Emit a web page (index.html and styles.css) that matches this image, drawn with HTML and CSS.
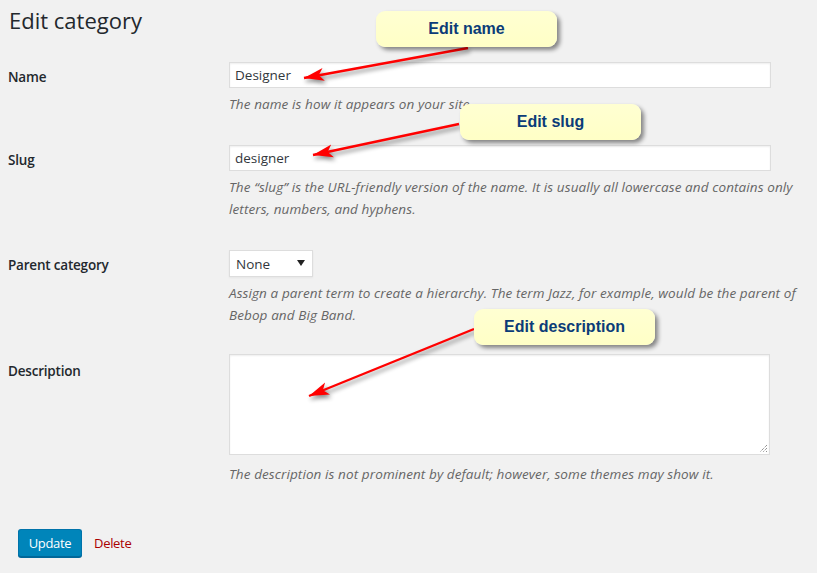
FILE: index.html
```html
<!DOCTYPE html>
<html lang="en">
<head>
<meta charset="utf-8">
<title>Edit category</title>
<link rel="stylesheet" href="styles.css">
</head>
<body>
<div class="page">
  <h1 class="title">Edit category</h1>
  <div class="form">
    <div class="row">
      <div class="label">Name</div>
      <div class="field">
        <div class="input">Designer</div>
        <p class="desc">The name is how it appears on your site.</p>
      </div>
    </div>
    <div class="row">
      <div class="label">Slug</div>
      <div class="field">
        <div class="input">designer</div>
        <p class="desc">The “slug” is the URL-friendly version of the name. It is usually all lowercase and contains only letters, numbers, and hyphens.</p>
      </div>
    </div>
    <div class="row">
      <div class="label">Parent category</div>
      <div class="field">
        <div class="select"><span>None</span><svg class="caret" width="8" height="6" viewBox="0 0 8 6"><path d="M0 0 H8 L4 6 Z" fill="#222"/></svg></div>
        <p class="desc">Assign a parent term to create a hierarchy. The term Jazz, for example, would be the parent of Bebop and Big Band.</p>
      </div>
    </div>
    <div class="row row-desc">
      <div class="label label-desc">Description</div>
      <div class="field">
        <div class="textarea"><svg class="grip" width="9" height="9" viewBox="0 0 9 9"><path d="M8 1 L1 8 M8 4 L4 8 M8 7 L7 8" stroke="#666" stroke-width="1" stroke-dasharray="1 1" fill="none"/></svg></div>
        <p class="desc desc-last">The description is not prominent by default; however, some themes may show it.</p>
      </div>
    </div>
  </div>
  <div class="actions">
    <button class="btn" type="button">Update</button>
    <a class="delete" href="#">Delete</a>
  </div>

  <svg class="arrows" width="817" height="573" viewBox="0 0 817 573">
    <defs>
      <marker id="head" markerUnits="userSpaceOnUse" viewBox="0 -7 20 14" markerWidth="20" markerHeight="14" refX="20" refY="0" orient="auto">
        <path d="M20 0 L0 -6.5 L5 0 L0 6.5 Z" fill="#f00"/>
      </marker>
    </defs>
    <g class="arrow-group" stroke="#f00" stroke-width="2.4" fill="none">
      <line x1="468" y1="48" x2="304" y2="78" marker-end="url(#head)"/>
      <line x1="459" y1="124" x2="313" y2="155" marker-end="url(#head)"/>
      <line x1="474" y1="329" x2="309" y2="396" marker-end="url(#head)"/>
    </g>
  </svg>

  <div class="callout callout-name">Edit name</div>
  <div class="callout callout-slug">Edit slug</div>
  <div class="callout callout-desc">Edit description</div>
</div>
</body>
</html>
```

FILE: styles.css
```css
* { box-sizing: border-box; }
html, body {
  margin: 0;
  padding: 0;
  background: #f1f1f1;
}
body {
  font-family: "Open Sans", "Noto Sans", sans-serif;
  color: #23282d;
  width: 817px;
  height: 573px;
  overflow: hidden;
}
.page {
  position: relative;
  width: 817px;
  height: 573px;
}
.title {
  margin: 0;
  padding: 5px 0 0 9px;
  font-size: 22px;
  line-height: 30px;
  font-weight: 400;
  color: #23282d;
}
.form {
  margin-top: 12px;
  padding-left: 8px;
}
.row {
  display: grid;
  grid-template-columns: 221px 580px;
  padding: 15px 0;
}
.row-desc { padding-top: 13px; }
.label {
  padding-top: 5px;
  font-size: 13.5px;
  letter-spacing: -0.2px;
  line-height: 20px;
  font-weight: 600;
  color: #23282d;
}
.label-desc { padding-top: 7px; }
.input {
  height: 26px;
  width: 542px;
  border: 1px solid #ddd;
  background: #fff;
  box-shadow: inset 0 1px 2px rgba(0,0,0,.07);
  padding: 0 5px;
  font-size: 13.5px;
  line-height: 24px;
  color: #32373c;
}
.select {
  width: 84px;
  height: 27px;
  border: 1px solid #ddd;
  background: #fff;
  box-shadow: 0 1px 2px rgba(0,0,0,.05);
  display: flex;
  align-items: center;
  justify-content: space-between;
  padding: 0 7px 0 6px;
  font-size: 13.5px;
  color: #32373c;
}
.caret { display: block; margin-top: -2px; }
.textarea {
  position: relative;
  width: 541px;
  height: 101px;
  border: 1px solid #ddd;
  background: #fff;
  box-shadow: inset 0 1px 2px rgba(0,0,0,.07);
}
.grip {
  position: absolute;
  right: 1px;
  bottom: 1px;
}
.desc {
  margin: 5px 0 0;
  font-size: 13.5px;
  letter-spacing: 0.1px;
  line-height: 22px;
  font-style: italic;
  color: #666;
}
.desc-last { margin-top: 8px; }
.actions {
  margin-top: 29px;
  padding-left: 18px;
  display: flex;
  align-items: center;
  gap: 12px;
}
.btn {
  width: 64px;
  height: 28px;
  border: 1px solid #0073aa;
  border-bottom-color: #006799;
  border-radius: 3px;
  background: #0085ba;
  box-shadow: 0 1px 0 #006799;
  color: #fff;
  font-family: "Open Sans", "Noto Sans", sans-serif;
  font-size: 13px;
  padding: 0;
  letter-spacing: -0.3px;
}
.delete {
  color: #a00;
  font-size: 13px;
  text-decoration: none;
  letter-spacing: -0.3px;
}
.arrows {
  position: absolute;
  left: 0;
  top: 0;
  pointer-events: none;
  overflow: visible;
}
.arrow-group {
  filter: drop-shadow(2px 3px 2px rgba(0,0,0,.45));
}
.callout {
  position: absolute;
  width: 181px;
  height: 36px;
  border-radius: 9px;
  background: linear-gradient(#ffffd2, #ffffc6);
  box-shadow: 3px 3px 4px rgba(0,0,0,.45);
  display: flex;
  align-items: center;
  justify-content: center;
  font-family: "Liberation Sans", Arial, sans-serif;
  font-weight: 700;
  font-size: 16px;
  color: #0b3c78;
}
.callout-name { left: 376px; top: 11px; }
.callout-slug { left: 460px; top: 104px; }
.callout-desc { left: 474px; top: 309px; }
```
